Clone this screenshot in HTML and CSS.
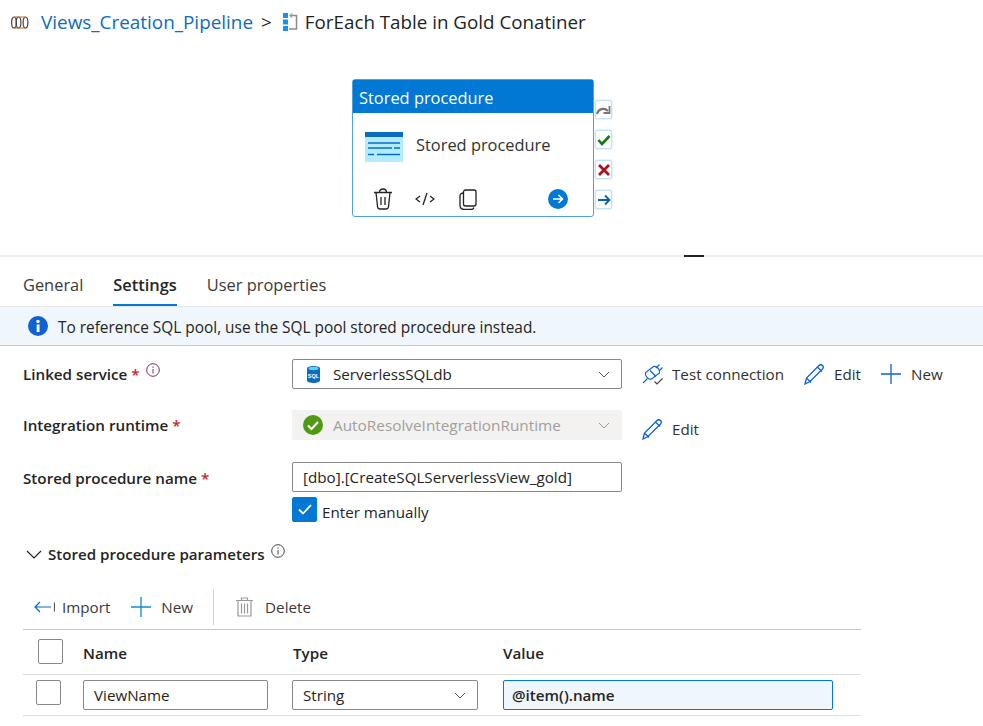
FILE: index.html
```html
<!DOCTYPE html>
<html>
<head>
    <meta charset="utf-8" />
    <title>ForEach Table in Gold Conatiner</title>
    <link rel="stylesheet" href="styles.css">
</head>
<body>
    <div class="crumbs">
        <svg class="pipe-icon" width="18" height="13" viewBox="0 0 18 13" fill="none" stroke="#444" stroke-width="1.200">
            <ellipse cx="3" cy="6.500" rx="2.400" ry="5.500"/>
            <ellipse cx="7.500" cy="6.500" rx="2.400" ry="5.500"/>
            <ellipse cx="14.500" cy="6.500" rx="2.400" ry="5.500"/>
            <path d="M3 1h11.500M3 12h11.500" stroke="#b5772e"/>
        </svg>
        <a class="crumb-link">Views_Creation_Pipeline</a>
        <span class="crumb-sep">&gt;</span>
        <svg class="loop-icon" width="15" height="18" viewBox="0 0 15 18" fill="none">
            <rect x="0" y="0" width="5" height="5" fill="#1e90e6"/>
            <rect x="0" y="6.500" width="5" height="5" fill="#1e90e6"/>
            <rect x="0" y="13" width="5" height="5" fill="#1e90e6"/>
            <path d="M8 2.500h5.500v13.500H6" stroke="#8a8a8a" stroke-width="1.500"/>
            <path d="M9 .5L7 2.500l2 2" stroke="#555" stroke-width="1"/>
        </svg>
        <span class="crumb-title">ForEach Table in Gold Conatiner</span>
    </div>

    <div class="canvas">
        <div class="node">
            <div class="node-head">Stored procedure</div>
            <div class="node-body">
                <svg width="38" height="30" viewBox="0 0 38 30">
                    <rect y="0" width="38" height="30" fill="#b3ecff"/>
                    <rect y="0" width="38" height="5" fill="#0a6cc0"/>
                    <path d="M3 11h32M3 16h24M29 16h6M3 22.500h6M12 22.500h23" stroke="#0a6cc0" stroke-width="1.500"/>
                </svg>
                <span class="node-name">Stored procedure</span>
            </div>
            <div class="node-tools">
                <svg width="20" height="22" viewBox="0 0 20 22" fill="none" stroke="#222" stroke-width="1.300">
                    <path d="M1 4.500h18M6.500 4.500C6.500 2 8 1 10 1s3.500 1 3.500 3.500M3 4.500l1.500 14c.1 1.500 1 2.500 2.500 2.500h6c1.500 0 2.400-1 2.500-2.500l1.500-14M8 9v8M12 9v8"/>
                </svg>
                <svg class="tool-code" width="20" height="14" viewBox="0 0 20 14" fill="none" stroke="#222" stroke-width="1.300">
                    <path d="M5 4L1 7l4 3M15 4l4 3-4 3M12 1L8 13"/>
                </svg>
                <svg class="tool-copy" width="18" height="21" viewBox="0 0 18 21" fill="none" stroke="#222" stroke-width="1.300">
                    <rect x="4.500" y="1" width="12.500" height="16" rx="2"/>
                    <path d="M4.500 4C2.500 4 1 5 1 7v9c0 3 2 4.500 4.500 4.500H12c1.500 0 2.500-1 2.800-2"/>
                </svg>
                <svg class="tool-go" width="20" height="20" viewBox="0 0 20 20" fill="none">
                    <circle cx="10" cy="10" r="10" fill="#0078d4"/>
                    <path d="M5 10h9.500M10.500 6l4 4-4 4" stroke="#fff" stroke-width="1.600"/>
                </svg>
            </div>
            <div class="ports">
                <div class="port">
                    <svg width="15" height="12" viewBox="0 0 15 12" fill="none" stroke="#777" stroke-width="2.200">
                        <path d="M1 10c1-5 7-7 11-3"/><path d="M13.500 2v7H7.500" stroke-width="1.800"/>
                    </svg>
                </div>
                <div class="port">
                    <svg width="14" height="12" viewBox="0 0 14 12" fill="none" stroke="#107c10" stroke-width="2.600">
                        <path d="M1.500 6l3.500 4 7.500-8"/>
                    </svg>
                </div>
                <div class="port">
                    <svg width="14" height="12" viewBox="0 0 14 12" fill="none" stroke="#b00f1f" stroke-width="2.800">
                        <path d="M2 1l10 10M12 1L2 11"/>
                    </svg>
                </div>
                <div class="port">
                    <svg width="14" height="12" viewBox="0 0 14 12" fill="none" stroke="#0063b1" stroke-width="1.800">
                        <path d="M1 6h11M8 1.500L12.500 6 8 10.500"/>
                    </svg>
                </div>
            </div>
        </div>
    </div>

    <div class="splitter"><i class="grip"></i></div>

    <div class="tabs">
        <span class="tab">General</span>
        <span class="tab tab-on">Settings</span>
        <span class="tab">User properties</span>
    </div>

    <div class="notice">
        <svg width="20" height="20" viewBox="0 0 20 20">
            <circle cx="10" cy="10" r="10" fill="#0f62d0"/>
            <rect x="8.700" y="8.500" width="2.800" height="7.500" fill="#fff"/>
            <circle cx="10" cy="5.500" r="1.700" fill="#fff"/>
        </svg>
        <span>To reference SQL pool, use the SQL pool stored procedure instead.</span>
    </div>

    <div class="form">
        <div class="row row-linked">
            <label class="lbl">Linked service <em>*</em>
                <svg class="tip" width="14" height="14" viewBox="0 0 14 14" fill="none" stroke="#7a2a6a">
                    <circle cx="7" cy="7" r="6.300"/><path d="M7 6v4.500M7 3.500v1.300"/>
                </svg>
            </label>
            <div class="select">
                <svg width="13" height="17" viewBox="0 0 13 17">
                    <path d="M0 2.500C0 1 3 0 6.500 0S13 1 13 2.500v12C13 16 10 17 6.500 17S0 16 0 14.500z" fill="#0f6cbd"/>
                    <ellipse cx="6.500" cy="2.500" rx="5" ry="1.700" fill="#5fd0f5"/>
                    <text x="6.500" y="11.500" class="sql-tag">SQL</text>
                </svg>
                <span class="select-text">ServerlessSQLdb</span>
                <svg class="chev" width="12" height="7" viewBox="0 0 12 7" fill="none" stroke="#555"><path d="M1 1l5 5 5-5"/></svg>
            </div>
            <div class="actions">
                <span class="action act-test">
                    <svg width="22" height="22" viewBox="0 0 22 22" fill="none" stroke="#0f62d0" stroke-width="1.200">
                        <path d="M1 20l4.500-4.500M14 5l3.500-3.500M17 8l3.500-3.500"/>
                        <path d="M11.500 3.500c3-1 7 3 6 6.500l-8 6c-3 1-7-3-6-6.500z"/>
                        <path d="M8 7.500l6 6"/>
                        <path d="M12.500 18.500l2.500 2.500 5.500-5.500" stroke="#444"/>
                    </svg>
                    Test connection
                </span>
                <span class="action act-edit">
                    <svg width="21" height="21" viewBox="0 0 21 21" fill="none" stroke="#0f62d0" stroke-width="1.300">
                        <path d="M1 20l1.500-6L15 1.500c1-1 2.500-1 3.500 0s1 2.500 0 3.500L6 17.500zM2.500 14L7 18.500M13.500 3l4.500 4.500"/>
                    </svg>
                    Edit
                </span>
                <span class="action act-new">
                    <svg width="20" height="20" viewBox="0 0 20 20" stroke="#0f62d0" stroke-width="1.300"><path d="M10 0v20M0 10h20"/></svg>
                    New
                </span>
            </div>
        </div>

        <div class="row row-runtime">
            <label class="lbl">Integration runtime <em>*</em></label>
            <div class="select select-off">
                <svg width="20" height="20" viewBox="0 0 20 20" fill="none">
                    <circle cx="10" cy="10" r="10" fill="#4f9a10"/>
                    <path d="M5 10.500l3.500 3.500 6.500-7" stroke="#fff" stroke-width="2.200"/>
                </svg>
                <span class="select-text">AutoResolveIntegrationRuntime</span>
                <svg class="chev" width="12" height="7" viewBox="0 0 12 7" fill="none" stroke="#999"><path d="M1 1l5 5 5-5"/></svg>
            </div>
            <div class="actions">
                <span class="action act-edit2">
                    <svg width="21" height="21" viewBox="0 0 21 21" fill="none" stroke="#0f62d0" stroke-width="1.300">
                        <path d="M1 20l1.500-6L15 1.500c1-1 2.500-1 3.500 0s1 2.500 0 3.500L6 17.500zM2.500 14L7 18.500M13.500 3l4.500 4.500"/>
                    </svg>
                    Edit
                </span>
            </div>
        </div>

        <div class="row row-proc">
            <label class="lbl">Stored procedure name <em>*</em></label>
            <div class="field">[dbo].[CreateSQLServerlessView_gold]</div>
        </div>

        <div class="manual">
            <span class="check check-on">
                <svg width="14" height="11" viewBox="0 0 14 11" fill="none" stroke="#fff" stroke-width="1.800"><path d="M1 5.500L5 9.500 13 1"/></svg>
            </span>
            <span class="manual-text">Enter manually</span>
        </div>

        <div class="params-head">
            <svg width="16" height="9" viewBox="0 0 16 9" fill="none" stroke="#222" stroke-width="1.200"><path d="M1 1l7 7 7-7"/></svg>
            <span class="params-title">Stored procedure parameters</span>
            <svg class="tip-up" width="14" height="14" viewBox="0 0 14 14" fill="none" stroke="#444">
                <circle cx="7" cy="7" r="6.300"/><path d="M7 6v4.500M7 3.500v1.300"/>
            </svg>
        </div>

        <div class="params">
            <div class="toolbar">
                <span class="tool tool-import">
                    <svg width="21" height="12" viewBox="0 0 21 12" fill="none" stroke="#0f62d0" stroke-width="1.200"><path d="M1 6h16M6 1L1 6l5 5"/><path d="M20.500 1.500v9" stroke="#555"/></svg>
                    Import
                </span>
                <span class="tool tool-new">
                    <svg width="20" height="20" viewBox="0 0 20 20" stroke="#0f8ad8" stroke-width="1.300"><path d="M10 0v20M0 10h20"/></svg>
                    New
                </span>
                <span class="tool tool-delete">
                    <svg width="17" height="20" viewBox="0 0 17 20" fill="none" stroke="#999" stroke-width="1.200">
                        <path d="M0 3.500h17M5.500 3.500V1h6v2.500M2 3.500V19h13V3.500M5.500 6.500v10M8.500 6.500v10M11.500 6.500v10"/>
                    </svg>
                    Delete
                </span>
            </div>
            <div class="grid grid-head">
                <span class="check check-head"></span>
                <b>Name</b>
                <b class="col-type">Type</b>
                <b>Value</b>
            </div>
            <div class="grid grid-row">
                <span class="check"></span>
                <div class="field cell-name">ViewName</div>
                <div class="select cell-type">
                    <span class="select-text">String</span>
                    <svg class="chev" width="12" height="7" viewBox="0 0 12 7" fill="none" stroke="#555"><path d="M1 1l5 5 5-5"/></svg>
                </div>
                <div class="field cell-value">@item().name</div>
            </div>
        </div>
    </div>
</body>
</html>
```

FILE: styles.css
```css
html, body {
    margin: 0;
    height: 726px;
    overflow: hidden;
    background: #fff;
}

body {
    font-family: "Open Sans", "Noto Sans", sans-serif;
    font-size: 15.2px;
    color: #252423;
}

/* breadcrumb */
.crumbs {
    height: 44px;
    display: flex;
    align-items: center;
    padding-left: 11px;
    font-size: 18.9px;
}

.pipe-icon {
    margin-right: 12px;
}

.crumb-link {
    color: #0f6cbd;
}

.crumb-sep {
    margin: 0 11px 0 8px;
}

.loop-icon {
    margin-right: 7px;
}

.crumb-title {
    color: #201f1e;
    font-size: 18.8px;
}

/* pipeline canvas */
.canvas {
    height: 211px;
    padding: 35px 0 0 352px;
    box-sizing: border-box;
}

.node {
    position: relative;
    width: 242px;
    height: 138px;
    box-sizing: border-box;
    border: 1px solid #50a0e0;
    border-radius: 3px;
    display: flex;
    flex-direction: column;
}

.node-head {
    height: 33px;
    line-height: 36px;
    background: #0078d4;
    color: #fff;
    padding-left: 6px;
    font-size: 16.4px;
}

.node-body {
    display: flex;
    align-items: center;
    gap: 13px;
    padding: 19px 0 0 12px;
    font-size: 16.4px;
    color: #333;
}

.node-name {
    padding-bottom: 6px;
}

.node-tools {
    display: flex;
    align-items: center;
    margin-top: auto;
    padding: 0 25px 6px 20px;
}

.tool-code {
    margin-left: 22px;
}

.tool-copy {
    margin-left: 24px;
}

.tool-go {
    margin-left: auto;
}

.ports {
    position: absolute;
    left: 242px;
    top: 20px;
    display: flex;
    flex-direction: column;
    gap: 11px;
}

.port {
    width: 17px;
    height: 19px;
    box-sizing: border-box;
    border: 1px solid #c5e0f7;
    border-radius: 2px;
    box-shadow: 0 0 2px #a8d2f2;
    display: flex;
    align-items: center;
    justify-content: center;
    background: #fff;
}

.splitter {
    height: 2px;
    background: #eeeeee;
    position: relative;
}

.grip {
    position: absolute;
    left: 684px;
    top: 0;
    width: 20px;
    height: 2px;
    background: #222;
}

/* tabs */
.tabs {
    height: 50px;
    display: flex;
    gap: 30px;
    padding-left: 23px;
    box-sizing: border-box;
    font-size: 16.4px;
}

.tab {
    height: 49px;
    line-height: 56px;
    box-sizing: border-box;
    color: #3b3a39;
}

.tab-on {
    font-weight: 600;
    color: #252423;
    border-bottom: 2px solid #0078d4;
}

.notice {
    height: 40px;
    box-sizing: border-box;
    background: #eff6fc;
    border-top: 1px solid #e6e6e6;
    border-bottom: 1px solid #c8c8c8;
    margin-top: -1px;
    display: flex;
    align-items: center;
    gap: 10px;
    padding-left: 28px;
    font-size: 15.4px;
}

.notice span {
    padding-top: 2px;
}

/* form */
.form {
    padding: 13px 0 0 23px;
}

.row {
    display: grid;
    grid-template-columns: 269px 330px auto;
    align-items: center;
}

.row-linked {
    height: 30px;
}

.row-runtime {
    height: 30px;
    margin-top: 21px;
}

.row-proc {
    height: 30px;
    margin-top: 22px;
}

.lbl {
    font-weight: 600;
    color: #252423;
}

.row-linked .lbl {
    margin-top: -2px;
}

.row-proc .lbl {
    margin-top: 2px;
}

.lbl em {
    font-style: normal;
    color: #c4262e;
}

.tip {
    vertical-align: 3px;
    margin-left: 2px;
}

.sql-tag {
    font-family: "Liberation Sans", sans-serif;
    font-size: 5.500px;
    font-weight: 700;
    fill: #fff;
    text-anchor: middle;
}

.select,
.field {
    box-sizing: border-box;
    height: 30px;
    border: 1px solid #8a8886;
    border-radius: 2px;
    display: flex;
    align-items: center;
    background: #fff;
}

.select svg:first-child {
    margin-left: 14px;
}

.select-text {
    margin-left: 13px;
}

.chev {
    margin-left: auto;
    margin-right: 11px;
}

.select-off {
    background: #f3f2f1;
    border-color: #f3f2f1;
    color: #a19f9d;
    font-size: 15.35px;
}

.select-off svg:first-child {
    margin-left: 10px;
}

.select-off .select-text {
    margin-left: 10px;
}

.field {
    padding-left: 10px;
}

.actions {
    display: flex;
    align-items: center;
    padding-left: 20px;
}

.action {
    display: flex;
    align-items: center;
    gap: 9px;
    color: #323130;
}

.act-test {
    gap: 8px;
}

.act-edit {
    margin-left: 20px;
}

.act-new {
    margin-left: 20px;
    gap: 10px;
}

.act-edit2 {
    margin-top: 8px;
}

.manual {
    display: flex;
    align-items: center;
    gap: 5px;
    margin: 5px 0 0 269px;
    height: 25px;
}

.manual-text {
    padding-top: 4px;
}

.check {
    box-sizing: border-box;
    display: flex;
    align-items: center;
    justify-content: center;
    width: 25px;
    height: 25px;
    border: 1px solid #8a8886;
    border-radius: 2px;
}

.check-on {
    background: #0078d4;
    border-color: #0078d4;
}

.params-head {
    display: flex;
    align-items: center;
    height: 24px;
    margin-top: 20px;
    padding-left: 3px;
}

.params-title {
    font-weight: 600;
    margin-left: 6px;
    font-size: 15.1px;
}

.tip-up {
    margin: 0 0 6px 6px;
}

.params {
    width: 838px;
    margin-top: 23px;
}

.toolbar {
    height: 36px;
    display: flex;
    align-items: center;
    border-bottom: 1px solid #c8c8c8;
    color: #3b3a39;
    padding-bottom: 4px;
}

.tool {
    display: flex;
    align-items: center;
    gap: 7px;
}

.tool-import {
    padding-left: 11px;
}

.tool-new {
    margin-left: 21px;
    gap: 10px;
}

.tool-delete {
    margin-left: 20px;
    padding-left: 22px;
    height: 36px;
    gap: 12px;
    border-left: 1px solid #d0d0d0;
}

.grid {
    display: grid;
    grid-template-columns: 60px 209px 211px auto;
    align-items: center;
    border-bottom: 1px solid #dedede;
}

.grid-head {
    height: 44px;
}

.grid b {
    font-weight: 600;
    padding-top: 1px;
}

.col-type {
    padding-left: 1px;
}

.check-head {
    margin: 0 0 1px 15px;
}

.grid-row {
    height: 35px;
    padding-top: 5px;
    align-items: start;
}

.grid-row .check {
    margin-left: 13px;
}

.cell-name {
    width: 185px;
}

.cell-type {
    width: 186px;
}

.cell-type .select-text {
    margin-left: 10px;
}

.cell-value {
    width: 330px;
    background: #eff6fc;
    border-color: #0078d4;
    padding-left: 8px;
    font-weight: 600;
}
```
